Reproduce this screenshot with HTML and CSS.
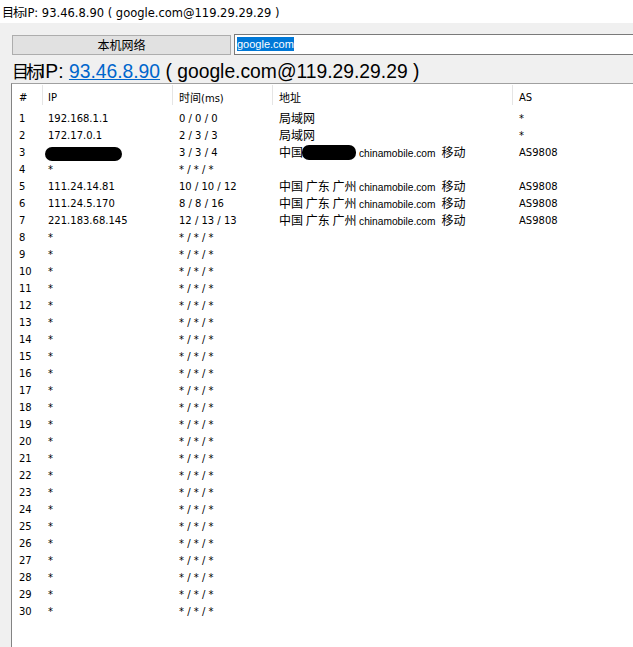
FILE: index.html
```html
<!DOCTYPE html>
<html lang="zh-CN">
<head>
<meta charset="utf-8">
<title>Trace</title>
<link rel="stylesheet" href="styles.css">
</head>
<body>
<div class="titlebar"><span class="zh">目标</span>IP: 93.46.8.90 ( google.com@119.29.29.29 )</div>
<div class="main">
  <div class="toolbar">
    <button class="btn">本机网络</button>
    <div class="input"><span class="sel">google.com</span></div>
  </div>
  <div class="heading"><span class="zh">目标</span>IP: <a class="link">93.46.8.90</a> ( google.com@119.29.29.29 )</div>
  <div class="list">
    <div class="row head"><span>#</span><span>IP</span><span><span class="hz">时间</span>(ms)</span><span><span class="hz">地址</span></span><span>AS</span></div>
    <div class="row"><span>1</span><span>192.168.1.1</span><span>0 / 0 / 0</span><span class="addr">局域网</span><span>*</span></div>
    <div class="row"><span>2</span><span>172.17.0.1</span><span>2 / 3 / 3</span><span class="addr">局域网</span><span>*</span></div>
    <div class="row"><span>3</span><span><i class="redact r1"></i></span><span>3 / 3 / 4</span><span class="addr">中国<i class="redact r2"></i><span class="en">chinamobile.com</span><span class="mv">移动</span></span><span>AS9808</span></div>
    <div class="row"><span>4</span><span>*</span><span>* / * / *</span><span></span><span></span></div>
    <div class="row"><span>5</span><span>111.24.14.81</span><span>10 / 10 / 12</span><span class="addr">中国 广东 广州 <span class="en">chinamobile.com</span><span class="mv">移动</span></span><span>AS9808</span></div>
    <div class="row"><span>6</span><span>111.24.5.170</span><span>8 / 8 / 16</span><span class="addr">中国 广东 广州 <span class="en">chinamobile.com</span><span class="mv">移动</span></span><span>AS9808</span></div>
    <div class="row"><span>7</span><span>221.183.68.145</span><span>12 / 13 / 13</span><span class="addr">中国 广东 广州 <span class="en">chinamobile.com</span><span class="mv">移动</span></span><span>AS9808</span></div>
    <div class="row"><span>8</span><span>*</span><span>* / * / *</span><span></span><span></span></div>
    <div class="row"><span>9</span><span>*</span><span>* / * / *</span><span></span><span></span></div>
    <div class="row"><span>10</span><span>*</span><span>* / * / *</span><span></span><span></span></div>
    <div class="row"><span>11</span><span>*</span><span>* / * / *</span><span></span><span></span></div>
    <div class="row"><span>12</span><span>*</span><span>* / * / *</span><span></span><span></span></div>
    <div class="row"><span>13</span><span>*</span><span>* / * / *</span><span></span><span></span></div>
    <div class="row"><span>14</span><span>*</span><span>* / * / *</span><span></span><span></span></div>
    <div class="row"><span>15</span><span>*</span><span>* / * / *</span><span></span><span></span></div>
    <div class="row"><span>16</span><span>*</span><span>* / * / *</span><span></span><span></span></div>
    <div class="row"><span>17</span><span>*</span><span>* / * / *</span><span></span><span></span></div>
    <div class="row"><span>18</span><span>*</span><span>* / * / *</span><span></span><span></span></div>
    <div class="row"><span>19</span><span>*</span><span>* / * / *</span><span></span><span></span></div>
    <div class="row"><span>20</span><span>*</span><span>* / * / *</span><span></span><span></span></div>
    <div class="row"><span>21</span><span>*</span><span>* / * / *</span><span></span><span></span></div>
    <div class="row"><span>22</span><span>*</span><span>* / * / *</span><span></span><span></span></div>
    <div class="row"><span>23</span><span>*</span><span>* / * / *</span><span></span><span></span></div>
    <div class="row"><span>24</span><span>*</span><span>* / * / *</span><span></span><span></span></div>
    <div class="row"><span>25</span><span>*</span><span>* / * / *</span><span></span><span></span></div>
    <div class="row"><span>26</span><span>*</span><span>* / * / *</span><span></span><span></span></div>
    <div class="row"><span>27</span><span>*</span><span>* / * / *</span><span></span><span></span></div>
    <div class="row"><span>28</span><span>*</span><span>* / * / *</span><span></span><span></span></div>
    <div class="row"><span>29</span><span>*</span><span>* / * / *</span><span></span><span></span></div>
    <div class="row"><span>30</span><span>*</span><span>* / * / *</span><span></span><span></span></div>
  </div>
</div>
</body>
</html>
```
FILE: styles.css
```css
html, body {
  margin: 0;
  padding: 0;
}
body {
  height: 647px;
  overflow: hidden;
  display: flex;
  flex-direction: column;
  background: #f0f0f0;
  color: #000;
  font-family: "DejaVu Sans", "Noto Sans CJK SC", sans-serif;
}
.titlebar {
  height: 23px;
  flex: none;
  background: #fff;
  line-height: 23px;
  padding-left: 2px;
  font-size: 11.5px;
  white-space: nowrap;
  overflow: hidden;
}
.titlebar .zh {
  font-family: "Noto Sans CJK SC", sans-serif;
  font-size: 12px;
  letter-spacing: -1px;
}
.main {
  flex: 1;
  display: flex;
  flex-direction: column;
  min-height: 0;
}
.toolbar {
  display: flex;
  align-items: flex-start;
  padding: 11px 0 0 12px;
}
.btn {
  width: 219px;
  height: 20px;
  margin: 1px 0 0 0;
  padding: 0;
  background: #e1e1e1;
  border: 1px solid #adadad;
  color: #000;
  font: 12px/18px "Noto Sans CJK SC", sans-serif;
}
.input {
  flex: 1;
  height: 21px;
  box-sizing: border-box;
  margin-left: 3px;
  margin-right: -3px;
  border: 1px solid #7a7a7a;
  background: #fff;
  padding: 2px 0 0 2px;
}
.sel {
  display: inline-block;
  vertical-align: top;
  height: 14px;
  background: #0078d7;
  color: #fff;
  font: 11px/14px "Liberation Sans", sans-serif;
}
.heading {
  height: 28px;
  box-sizing: border-box;
  padding: 4px 0 0 12px;
  line-height: 24px;
  font-size: 19.3px;
  font-family: "Liberation Sans", "Noto Sans CJK SC", sans-serif;
  white-space: nowrap;
  overflow: hidden;
}
.heading .zh {
  font-family: "Noto Sans CJK SC", sans-serif;
  font-size: 17px;
  letter-spacing: -3px;
}
.link {
  color: #0066cc;
  text-decoration: underline;
}
.list {
  flex: 1;
  margin-left: 11px;
  border-left: 1px solid #838383;
  border-top: 1px solid #a0a0a0;
  background: #fff;
  font-size: 10px;
}
.row {
  display: grid;
  grid-template-columns: 31px 130px 100px 240px 1fr;
  height: 17px;
  line-height: 17px;
  white-space: nowrap;
}
.row > span {
  overflow: hidden;
  padding-left: 6px;
}
.row > span:nth-child(1) { padding-left: 7px; }
.row > span:nth-child(2) { padding-left: 5px; }
.row > span:nth-child(3) { padding-left: 6px; }
.row > span:nth-child(4) { padding-left: 6px; }
.row > span:nth-child(5) { padding-left: 6px; }
.head {
  height: 26px;
}
.head > span {
  height: 20px;
  margin-top: 1px;
  box-sizing: border-box;
  padding-top: 4px;
  border-right: 1px solid #e5e5e5;
}
.head > span:last-child {
  border-right: none;
}
.hz {
  font-family: "Noto Sans CJK SC", sans-serif;
  font-size: 11px;
}
.addr {
  font-family: "Noto Sans CJK SC", sans-serif;
  font-size: 12px;
  line-height: 15px;
}
.en {
  font-family: "Liberation Sans", sans-serif;
  font-size: 10.2px;
}
.mv {
  margin-left: 6px;
}
.redact {
  display: inline-block;
  vertical-align: top;
  background: #000;
  border-radius: 7px;
}
.r1 {
  width: 77px;
  height: 14px;
  margin: 3px 0 0 -3px;
}
.r2 {
  width: 54px;
  height: 15px;
  margin: 1px 3px 0 -1px;
}
```
